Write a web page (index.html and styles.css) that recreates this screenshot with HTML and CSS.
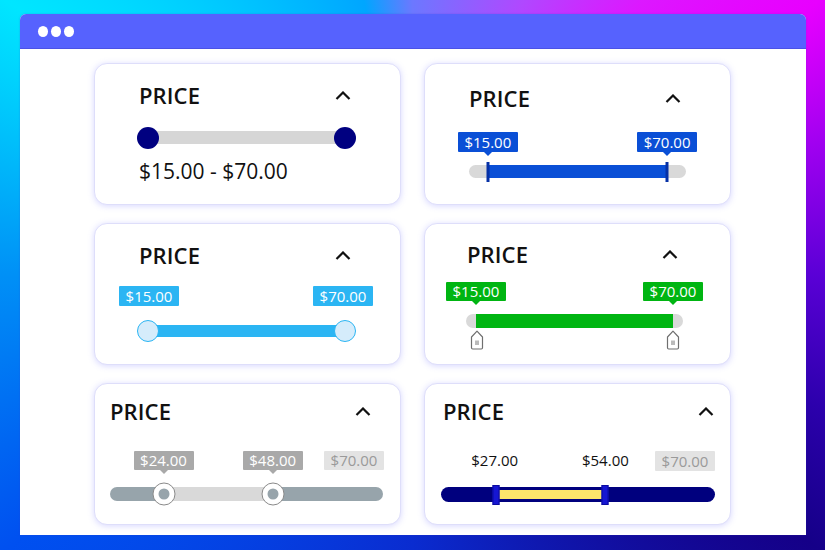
FILE: index.html
```html
<!DOCTYPE html>
<html lang="en">
<head>
<meta charset="utf-8">
<title>Price range sliders</title>
<link rel="stylesheet" href="styles.css">
</head>
<body>
<div class="window">
  <div class="titlebar">
    <span class="dot"></span><span class="dot"></span><span class="dot"></span>
  </div>
  <div class="grid">
    <!-- 1 -->
    <section class="card c1">
      <div class="head"><h2>PRICE</h2><svg class="chev" viewBox="0 0 16 9" width="16" height="9"><path d="M1.5 8 L8 1.5 L14.5 8"/></svg></div>
      <div class="track t1">
        <span class="thumb" style="left:0%"></span>
        <span class="thumb" style="left:100%"></span>
      </div>
      <p class="range-text">$15.00 - $70.00</p>
    </section>
    <!-- 2 -->
    <section class="card c2">
      <div class="head"><h2>PRICE</h2><svg class="chev" viewBox="0 0 16 9" width="16" height="9"><path d="M1.5 8 L8 1.5 L14.5 8"/></svg></div>
      <div class="track t2">
        <span class="fill" style="left:8.7%;right:8.7%"></span>
        <span class="line" style="left:8.7%"></span>
        <span class="line" style="left:91.3%"></span>
        <span class="tip arrow" style="left:8.7%">$15.00</span>
        <span class="tip arrow" style="left:91.3%">$70.00</span>
      </div>
    </section>
    <!-- 3 -->
    <section class="card c3">
      <div class="head"><h2>PRICE</h2><svg class="chev" viewBox="0 0 16 9" width="16" height="9"><path d="M1.5 8 L8 1.5 L14.5 8"/></svg></div>
      <div class="track t3">
        <span class="tip" style="left:0.5%">$15.00</span>
        <span class="tip" style="left:99%">$70.00</span>
        <span class="thumb" style="left:0%"></span>
        <span class="thumb" style="left:100%"></span>
      </div>
    </section>
    <!-- 4 -->
    <section class="card c4">
      <div class="head"><h2>PRICE</h2><svg class="chev" viewBox="0 0 16 9" width="16" height="9"><path d="M1.5 8 L8 1.5 L14.5 8"/></svg></div>
      <div class="track t4">
        <span class="fill" style="left:4.6%;right:4.6%"></span>
        <span class="tip arrow" style="left:4.6%">$15.00</span>
        <span class="tip arrow" style="left:95.4%">$70.00</span>
        <svg class="tag" style="left:5%" viewBox="0 0 14 20" width="14" height="20"><path class="tag-body" d="M1.5 7 L7 1.2 L12.5 7 V17.8 Q12.5 19 11.3 19 H2.7 Q1.5 19 1.5 17.8 Z"/><path class="tag-grip" d="M6 10.5 V15 M8 10.5 V15"/></svg>
        <svg class="tag" style="left:95.4%" viewBox="0 0 14 20" width="14" height="20"><path class="tag-body" d="M1.5 7 L7 1.2 L12.5 7 V17.8 Q12.5 19 11.3 19 H2.7 Q1.5 19 1.5 17.8 Z"/><path class="tag-grip" d="M6 10.5 V15 M8 10.5 V15"/></svg>
      </div>
    </section>
    <!-- 5 -->
    <section class="card c5">
      <div class="head"><h2>PRICE</h2><svg class="chev" viewBox="0 0 16 9" width="16" height="9"><path d="M1.5 8 L8 1.5 L14.5 8"/></svg></div>
      <div class="track t5">
        <span class="fill" style="left:19.6%;right:40.4%"></span>
        <span class="tip arrow" style="left:19.6%">$24.00</span>
        <span class="tip arrow" style="left:59.6%">$48.00</span>
        <span class="tip max">$70.00</span>
        <span class="thumb" style="left:19.6%"></span>
        <span class="thumb" style="left:59.6%"></span>
      </div>
    </section>
    <!-- 6 -->
    <section class="card c6">
      <div class="head"><h2>PRICE</h2><svg class="chev" viewBox="0 0 16 9" width="16" height="9"><path d="M1.5 8 L8 1.5 L14.5 8"/></svg></div>
      <div class="track t6">
        <span class="fill" style="left:20.1%;right:40%"></span>
        <span class="handle" style="left:20.1%"></span>
        <span class="handle" style="left:60%"></span>
        <span class="tip plain" style="left:19.6%">$27.00</span>
        <span class="tip plain" style="left:60%">$54.00</span>
        <span class="tip max">$70.00</span>
      </div>
    </section>
  </div>
</div>
</body>
</html>
```

FILE: styles.css
```css
* { box-sizing: border-box; }

html, body {
  margin: 0;
  height: 550px;
  overflow: hidden;
}

body {
  font-family: "Open Sans", "Liberation Sans", sans-serif;
  color: #111;
  padding-top: 14px;
  background: conic-gradient(from 0deg at 50% 50%,
    #6c78ff 0deg,
    #b048ff 22deg,
    #dc18ff 40deg,
    #e800ff 56deg,
    #a000f0 72deg,
    #5a00d6 90deg,
    #2c00ac 108deg,
    #150088 124deg,
    #0a2cd0 180deg,
    #0050f0 236deg,
    #0090f6 270deg,
    #00e6ff 304deg,
    #00c4ff 328deg,
    #00a6ff 350deg,
    #6c78ff 360deg);
}

.window {
  margin: 0 19px 0 20px;
  height: 521px;
  background: #fff;
  border-radius: 6px 6px 0 0;
  overflow: hidden;
  box-shadow: 0 0 2px rgba(60, 60, 200, 0.35);
}

.titlebar {
  height: 35px;
  background: #5662fe;
  border-bottom: 1px solid #4b52e6;
  display: flex;
  align-items: center;
  gap: 3px;
  padding-left: 18px;
}

.dot {
  width: 10px;
  height: 11px;
  border-radius: 50%;
  background: #fff;
}

.grid {
  display: grid;
  grid-template-columns: 307px 307px;
  grid-auto-rows: 142px;
  column-gap: 23px;
  row-gap: 18px;
  justify-content: center;
  padding-top: 14px;
  padding-right: 1px;
}

.card {
  background: #fff;
  border: 1px solid #dedefa;
  border-radius: 13px;
  box-shadow: 0 1px 6px rgba(110, 110, 255, 0.28);
}

.head {
  display: flex;
  justify-content: space-between;
  align-items: center;
  height: 30px;
}

.head h2 {
  margin: 0;
  font-size: 22px;
  line-height: 30px;
  font-weight: 600;
  letter-spacing: 0.1px;
}

.chev {
  display: block;
}
.chev path {
  fill: none;
  stroke: #111;
  stroke-width: 2.2;
}

.track {
  position: relative;
}

.thumb {
  position: absolute;
  top: 50%;
  transform: translate(-50%, -50%);
  border-radius: 50%;
}

.fill {
  position: absolute;
  top: 0;
  bottom: 0;
}

.tip {
  position: absolute;
  width: 60px;
  height: 20px;
  transform: translateX(-50%);
  font-size: 15px;
  line-height: 20px;
  text-align: center;
  color: #fff;
  border-radius: 1px;
  white-space: nowrap;
}

.tip.arrow::after {
  content: "";
  position: absolute;
  left: 50%;
  top: 100%;
  margin-left: -4px;
  border-left: 4px solid transparent;
  border-right: 4px solid transparent;
  border-top: 4px solid var(--tip);
}

/* card 1 */
.c1 { padding: 16px 44px 0; }
.c1 .head { padding-right: 5px; }
.t1 {
  margin: 21px 11px 0 9px;
  height: 13px;
  background: #d6d6d6;
}
.t1 .thumb {
  width: 22px;
  height: 22px;
  background: #000080;
}
.range-text {
  margin: 13px 0 0;
  font-size: 21px;
  line-height: 28px;
}

/* card 2 */
.c2 { padding: 19px 44px 0; }
.c2 .head { padding-right: 5px; }
.t2 {
  margin-top: 52px;
  height: 13px;
  background: #d9d9d9;
  border-radius: 7px;
  --tip: #0a4fd6;
}
.t2 .fill { background: #0a4fd6; }
.t2 .line {
  position: absolute;
  top: 50%;
  width: 3px;
  height: 20px;
  transform: translate(-50%, -50%);
  background: #0631a6;
}
.t2 .tip {
  bottom: calc(100% + 13px);
  background: var(--tip);
}

/* card 3 */
.c3 { padding: 16px 44px 0; }
.c3 .head { padding-right: 5px; }
.t3 {
  margin: 55px 11px 0 9px;
  height: 12px;
  background: #2bb5f3;
}
.t3 .thumb {
  width: 22px;
  height: 22px;
  background: #d5ecfb;
  border: 1px solid #2bb5f3;
}
.t3 .tip {
  bottom: calc(100% + 19px);
  background: #2bb5f3;
}

/* card 4 */
.c4 { padding: 15px 47px 0 41px; }
.c4 .head { padding: 0 5px 0 1px; }
.t4 {
  margin-top: 45px;
  height: 14px;
  background: #d9d9d9;
  border-radius: 7px;
  --tip: #00b512;
}
.t4 .fill { background: #00b512; }
.t4 .tip {
  bottom: calc(100% + 13px);
  height: 19px;
  line-height: 19px;
  background: var(--tip);
}
.tag {
  position: absolute;
  top: calc(100% + 2px);
  transform: translateX(-50%);
}
.tag-body {
  fill: #fff;
  stroke: #6f6f6f;
  stroke-width: 1.2;
  stroke-linejoin: round;
}
.tag-grip {
  fill: none;
  stroke: #777;
  stroke-width: 1;
}

/* card 5 */
.c5 { padding: 12px 17px 0 15px; }
.c5 .head { padding-right: 12px; }
.t5 {
  margin-top: 61px;
  height: 14px;
  background: #97a4ab;
  border-radius: 7px;
  --tip: #a9a9a9;
}
.t5 .fill { background: #d9d9d9; }
.t5 .thumb {
  width: 23px;
  height: 23px;
  background: #fff;
  border: 1.5px solid #8a8a8a;
}
.t5 .thumb::after {
  content: "";
  position: absolute;
  left: 50%;
  top: 50%;
  width: 11px;
  height: 11px;
  margin: -5.5px 0 0 -5.5px;
  border-radius: 50%;
  background: #97a4ab;
}
.t5 .tip {
  bottom: calc(100% + 17px);
  height: 19px;
  line-height: 19px;
  background: var(--tip);
}

.tip.max {
  transform: none;
  right: -1px;
  background: #e3e3e3;
  color: #9a9a9a;
}

/* card 6 */
.c6 { padding: 12px 15px 0 16px; }
.c6 .head { padding: 0 1px 0 2px; }
.t6 {
  margin-top: 61px;
  height: 15px;
  background: #00007e;
  border-radius: 8px;
}
.t6 .fill {
  top: 3px;
  bottom: 3px;
  background: #fde46b;
}
.t6 .handle {
  position: absolute;
  top: 50%;
  width: 7px;
  height: 20px;
  transform: translate(-50%, -50%);
  background: #1616d2;
  border: 1px solid #0a0aa0;
}
.t6 .tip {
  bottom: calc(100% + 16px);
}
.t6 .tip.plain {
  background: none;
  color: #111;
  bottom: calc(100% + 17px);
}
.t6 .tip.max {
  right: 0;
}
```
